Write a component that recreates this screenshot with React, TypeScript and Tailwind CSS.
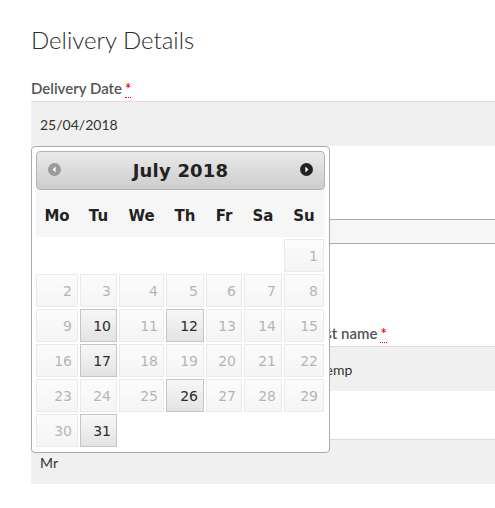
import React from 'react';

const DAYS = ['Mo', 'Tu', 'We', 'Th', 'Fr', 'Sa', 'Su'];
const ENABLED = [10, 12, 17, 26, 31];

// July 2018 starts on a Sunday
const WEEKS: (number | null)[][] = [
  [null, null, null, null, null, null, 1],
  [2, 3, 4, 5, 6, 7, 8],
  [9, 10, 11, 12, 13, 14, 15],
  [16, 17, 18, 19, 20, 21, 22],
  [23, 24, 25, 26, 27, 28, 29],
  [30, 31, null, null, null, null, null],
];

function Required() {
  return (
    <abbr
      title="required"
      className="text-[#e00] no-underline border-b border-dotted border-[#e00] ml-[3px] leading-none"
    >
      *
    </abbr>
  );
}

function NavIcon({ dir, muted }: { dir: 'prev' | 'next'; muted?: boolean }) {
  return (
    <svg width="13" height="13" viewBox="0 0 13 13">
      <circle cx="6.5" cy="6.5" r="6.5" fill={muted ? '#9b9b9b' : '#222'} />
      {dir === 'prev' ? (
        <path d="M7.6 3.6 L4.6 6.5 L7.6 9.4 Z" fill="#fff" />
      ) : (
        <path d="M5.4 3.6 L8.4 6.5 L5.4 9.4 Z" fill="#fff" />
      )}
    </svg>
  );
}

function DatePicker() {
  return (
    <div className="absolute left-[31px] top-[146px] w-[299px] h-[307px] bg-white border border-[#aaa] rounded-[4px] p-1 font-['DejaVu_Sans',sans-serif]">
      <div className="relative h-[39px] flex items-center justify-center rounded-[4px] border border-[#b3b3b3] bg-gradient-to-b from-[#e9e9e9] to-[#cdcdcd]">
        <span className="absolute left-[11px] top-[11px]">
          <NavIcon dir="prev" muted />
        </span>
        <span className="text-[18px] font-bold text-[#222] tracking-[0.2px]">July 2018</span>
        <span className="absolute right-[11px] top-[11px]">
          <NavIcon dir="next" />
        </span>
      </div>
      <div className="grid grid-cols-[42px_37px_45px_38px_36px_38px_40px] gap-x-[2px] bg-[#f6f6f6] h-[47px] items-center pt-[5px]">
        {DAYS.map((d) => (
          <div key={d} className="text-center text-[15px] font-bold text-[#222]">
            {d}
          </div>
        ))}
      </div>
      <div className="grid grid-cols-[42px_37px_45px_38px_36px_38px_40px] gap-x-[2px] gap-y-[2px] mt-[2px]">
        {WEEKS.flat().map((n, i) =>
          n === null ? (
            <div key={i} className="h-[33px]" />
          ) : (
            <div
              key={i}
              className={
                'h-[33px] flex items-center justify-end pr-[5px] pt-[2px] text-[14px] text-[#2a2a2a] border border-[#c5c5c5] bg-gradient-to-b from-[#f7f7f7] to-[#e3e3e3] ' +
                (ENABLED.includes(n) ? '' : 'opacity-35')
              }
            >
              {n}
            </div>
          )
        )}
      </div>
    </div>
  );
}

export default function App() {
  return (
    <div className="relative w-[495px] h-[508px] overflow-hidden bg-white font-['Lato',sans-serif]">
      <div className="w-[620px] pl-[31px] pt-[25px]">
        <h2 className="text-[24px] leading-[30px] font-light text-[#2b2b2b]">Delivery Details</h2>

        <label className="block mt-[23px] mb-[3px] text-[15px] leading-[20px] font-semibold text-[#555]">
          Delivery Date
          <Required />
        </label>
        <div className="h-[45px] flex items-center px-[9px] bg-[#f0f0f0] border-t border-[#dcdcdc] text-[14px] text-[#333]">
          25/04/2018
        </div>

        <div className="mt-[73px] h-[25px] bg-[#f6f6f6] border-t border-b border-[#aaa]" />

        <div className="grid grid-cols-[269px_1fr] gap-x-[10px] mt-[79px]">
          <div>
            <div className="h-[20px] mb-[3px]" />
            <div className="h-[45px] bg-[#f0f0f0] border-t border-[#dcdcdc]" />
          </div>
          <div>
            <label className="block mb-[3px] text-[15px] leading-[20px] font-semibold text-[#555]">
              Last name
              <Required />
            </label>
            <div className="h-[45px] flex items-center px-[9px] bg-[#f0f0f0] border-t border-[#dcdcdc] text-[14px] text-[#333]">
              Temp
            </div>
          </div>
        </div>

        <div className="mt-[25px] mb-[3px] h-[20px]" />
        <div className="h-[45px] flex items-center px-[9px] bg-[#f0f0f0] border-t border-[#dcdcdc] text-[14px] text-[#333]">
          Mr
        </div>
      </div>

      <DatePicker />
    </div>
  );
}
